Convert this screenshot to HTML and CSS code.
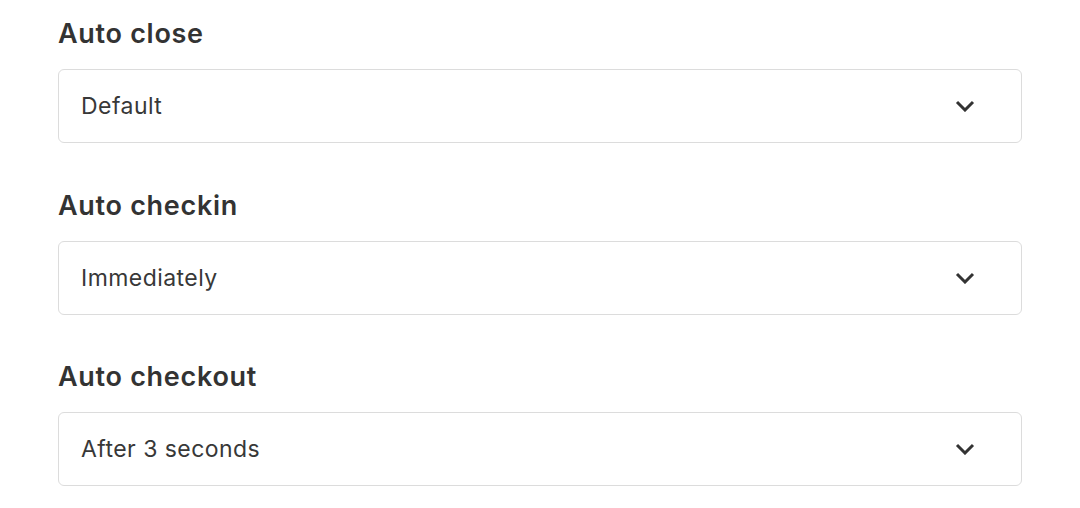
FILE: index.html
```html
<!DOCTYPE html>
<html>
<head>
    <meta charset="UTF-8">
    <title>Settings</title>
    <link rel="stylesheet" href="styles.css">
</head>
<body>
<div class="settings">
    <div class="field">
        <label class="label">Auto close</label>
        <div class="select">
            <span class="value">Default</span>
            <svg class="chevron" viewBox="0 0 20 12"><path d="M2 2l8 8 8-8"/></svg>
        </div>
    </div>
    <div class="field">
        <label class="label">Auto checkin</label>
        <div class="select">
            <span class="value">Immediately</span>
            <svg class="chevron" viewBox="0 0 20 12"><path d="M2 2l8 8 8-8"/></svg>
        </div>
    </div>
    <div class="field">
        <label class="label">Auto checkout</label>
        <div class="select">
            <span class="value">After 3 seconds</span>
            <svg class="chevron" viewBox="0 0 20 12"><path d="M2 2l8 8 8-8"/></svg>
        </div>
    </div>
</div>
</body>
</html>
```

FILE: styles.css
```css
html, body {
    margin: 0;
    padding: 0;
    background: #fff;
}

body {
    font-family: Inter, "Noto Sans", sans-serif;
    color: #333;
}

.settings {
    display: flex;
    flex-direction: column;
    gap: 44.5px;
    padding: 16px 58px 0 58px;
    width: 964px;
}

.label {
    display: block;
    font-size: 27px;
    line-height: 36px;
    font-weight: 600;
    letter-spacing: 0.7px;
    color: #333;
    margin-bottom: 17px;
}

.select {
    display: flex;
    align-items: center;
    justify-content: space-between;
    box-sizing: border-box;
    height: 74px;
    padding: 0 46px 0 22px;
    border: 1px solid #dcdcdc;
    border-radius: 6px;
}

.value {
    font-size: 23px;
    letter-spacing: 0.45px;
    color: #383838;
}

.chevron {
    width: 20px;
    height: 12px;
    fill: none;
    stroke: #333;
    stroke-width: 3;
}
```
